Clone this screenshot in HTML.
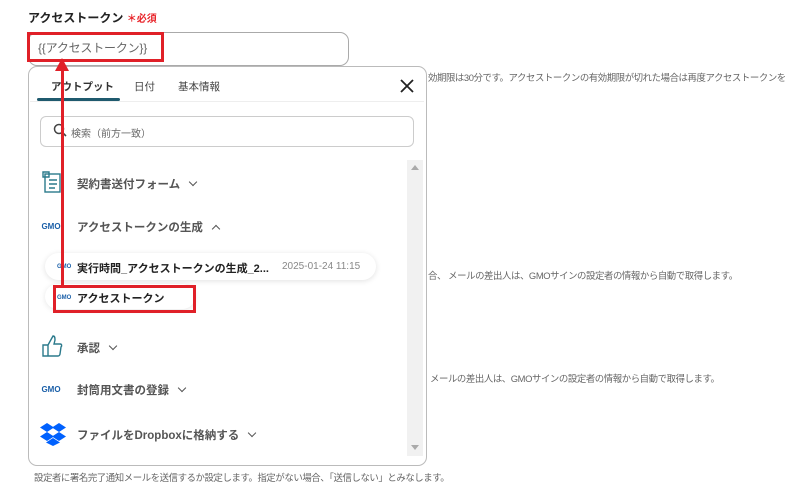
<!DOCTYPE html>
<html><head><meta charset="utf-8"><style>
body{margin:0;width:798px;height:487px;background:#fff;position:relative;overflow:hidden;font-family:"Liberation Sans","Noto Sans CJK JP",sans-serif;color:#333}
.a{position:absolute;white-space:nowrap}
.g{color:#666;font-size:9.4px;letter-spacing:-0.4px}
.it{font-size:11.5px;font-weight:bold;color:#555}
.chev{display:inline-block;width:5px;height:5px;border-right:1.6px solid #555;border-bottom:1.6px solid #555;transform:rotate(45deg);margin-left:10px;position:relative;top:-3px}
.up{transform:rotate(-135deg);top:1px}
.gmo{font-size:8px;font-weight:bold;color:#1a5fa8;text-align:center;line-height:8px}
</style></head><body>
<div class="a" style="left:28px;top:9px;font-size:12px;font-weight:bold;color:#222">アクセストークン <span style="color:#e8242a;font-size:10px">＊必須</span></div>
<div class="a" style="left:28px;top:32px;width:319px;height:32px;border:1px solid #aaa;border-radius:9px"></div>
<div class="a" style="left:27px;top:32px;width:131px;height:24px;border:3px solid #e02028"></div>
<div class="a" style="left:38px;top:39px;font-size:12px;color:#666;letter-spacing:-0.2px">{{アクセストークン}}</div>

<div class="a g" style="left:428px;top:70px">効期限は30分です。アクセストークンの有効期限が切れた場合は再度アクセストークンを</div>
<div class="a g" style="left:428px;top:268px">合、 メールの差出人は、GMOサインの設定者の情報から自動で取得します。</div>
<div class="a g" style="left:430px;top:371px">メールの差出人は、GMOサインの設定者の情報から自動で取得します。</div>
<div class="a g" style="left:34px;top:470px">設定者に署名完了通知メールを送信するか設定します。指定がない場合、「送信しない」とみなします。</div>

<div class="a" style="left:28px;top:66px;width:397px;height:398px;border:1px solid #bbb;border-radius:9px;background:#fff"></div>
<div class="a" style="left:30px;top:101px;width:394px;height:1px;background:#eee"></div>
<div class="a" style="left:51px;top:79px;font-size:10.5px;font-weight:bold;color:#333">アウトプット</div>
<div class="a" style="left:37px;top:98px;width:83px;height:3px;background:#1f5a6e;border-radius:2px"></div>
<div class="a" style="left:134px;top:79px;font-size:10.5px;color:#444">日付</div>
<div class="a" style="left:178px;top:79px;font-size:10.5px;color:#444">基本情報</div>
<svg class="a" style="left:400px;top:79px" width="14" height="14"><path d="M1 1L13 13M13 1L1 13" stroke="#222" stroke-width="1.8"/></svg>
<div class="a" style="left:40px;top:116px;width:372px;height:29px;border:1px solid #ccc;border-radius:6px"></div>
<svg class="a" style="left:53px;top:123px" width="14" height="14"><circle cx="6" cy="6" r="4.5" stroke="#444" stroke-width="1.5" fill="none"/><path d="M9.3 9.3L13 13" stroke="#444" stroke-width="1.6"/></svg>
<div class="a" style="left:71px;top:125px;font-size:10px;color:#666">検索（前方一致）</div>
<div class="a" style="left:407px;top:160px;width:16px;height:296px;background:#f1f1f1"></div>
<div class="a" style="left:411px;top:165px;border:4px solid transparent;border-bottom:5px solid #aaa;border-top:0"></div>
<div class="a" style="left:411px;top:445px;border:4px solid transparent;border-top:5px solid #aaa;border-bottom:0"></div>

<svg class="a" style="left:41px;top:171px" width="20" height="22"><rect x="4" y="3" width="15" height="18" fill="none" stroke="#2b7a8c" stroke-width="1.4"/><path d="M2 1h6v5H2zM8 9h8M8 13h8M8 17h6" stroke="#2b7a8c" stroke-width="1.4" fill="none"/></svg>
<div class="a it" style="left:77px;top:176px">契約書送付フォーム<span class="chev"></span></div>
<div class="a gmo" style="left:41px;top:223px;width:20px">GMO</div>
<div class="a it" style="left:77px;top:219px">アクセストークンの生成<span class="chev up"></span></div>

<div class="a" style="left:45px;top:253px;width:331px;height:27px;border-radius:14px;background:#fff;box-shadow:0 1px 6px rgba(0,0,0,.12)"></div>
<div class="a gmo" style="left:57px;top:263px;font-size:6px">GMO</div>
<div class="a" style="left:77px;top:260px;font-size:11px;font-weight:bold;color:#222">実行時間_アクセストークンの生成_2...</div>
<div class="a" style="left:282px;top:261px;font-size:10px;color:#888">2025-01-24 11:15</div>
<div class="a" style="left:45px;top:284px;width:150px;height:25px;border-radius:13px;background:#fff;box-shadow:0 1px 6px rgba(0,0,0,.1)"></div>
<div class="a" style="left:53px;top:285px;width:137px;height:22px;border:3px solid #e02028"></div>
<div class="a gmo" style="left:57px;top:294px;font-size:6px">GMO</div>
<div class="a" style="left:77px;top:290px;font-size:11px;font-weight:bold;color:#222">アクセストークン</div>

<svg class="a" style="left:41px;top:334px" width="22" height="24"><path d="M2 11h5v11H2zM7 11l5-9c2 0 2 2 2 4l-1 4h6c2 0 2 2 1 3l-1 7c0 1-1 2-2 2H7" fill="none" stroke="#2b7a8c" stroke-width="1.4"/></svg>
<div class="a it" style="left:77px;top:340px">承認<span class="chev"></span></div>
<div class="a gmo" style="left:41px;top:386px;width:20px">GMO</div>
<div class="a it" style="left:77px;top:382px">封筒用文書の登録<span class="chev"></span></div>
<svg class="a" style="left:40px;top:423px" width="26" height="23"><g fill="#0061fe"><path d="M7 0L0 4.5 7 9 14 4.5zM19 0L12 4.5 19 9 26 4.5zM0 13.5L7 18 14 13.5 7 9zM19 9L12 13.5 19 18 26 13.5zM13 15L6 19.5 13 23 20 19.5z"/></g></svg>
<div class="a it" style="left:77px;top:427px">ファイルをDropboxに格納する<span class="chev"></span></div>

<div class="a" style="left:61px;top:70px;width:3px;height:218px;background:#e02028"></div>
<div class="a" style="left:55px;top:58px;border-left:7.5px solid transparent;border-right:7.5px solid transparent;border-bottom:13px solid #e02028"></div>
</body></html>
